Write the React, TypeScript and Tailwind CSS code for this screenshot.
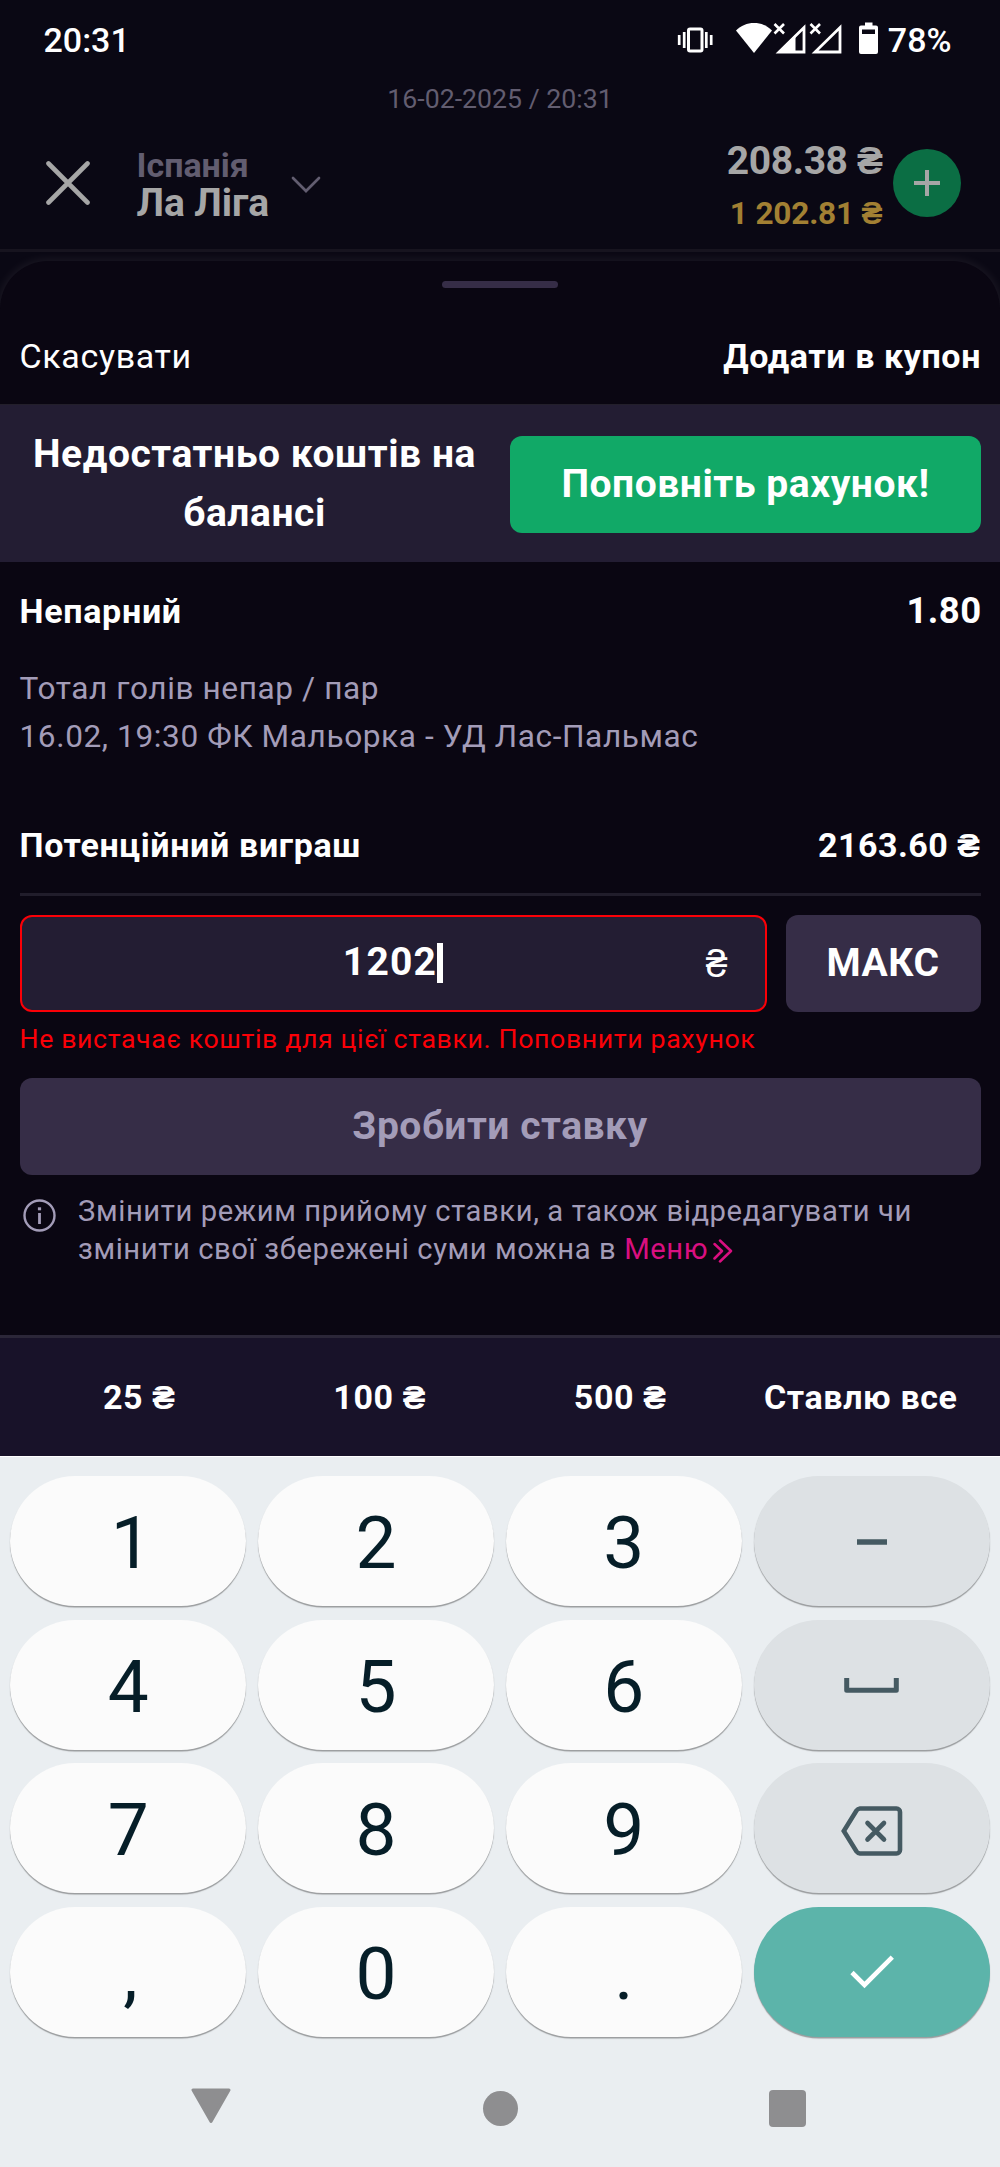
import React from 'react';

interface KeyProps {
  children: React.ReactNode;
  variant?: 'digit' | 'action' | 'confirm';
}

const keyStyles = {
  digit: 'bg-[#fbfbfb] text-[#061e28]',
  action: 'bg-[#dde1e4] text-[#455a62]',
  confirm: 'bg-[#5cb4aa] text-white',
};

const Key: React.FC<KeyProps> = ({ children, variant = 'digit' }) => (
  <button
    className={`flex h-[130px] items-center justify-center rounded-[65px] pt-[5px] text-[73px] leading-none shadow-[0_1.5px_1px_rgba(0,0,0,0.35)] ${keyStyles[variant]}`}
  >
    {children}
  </button>
);

const StatusBar = () => (
  <div className="flex h-[81px] items-center pb-[2px] pl-[43.5px] text-[34px] font-medium leading-none text-white">
    <span>20:31</span>

    {/* Vibrate */}
    <svg className="ml-auto" width="36" height="28" viewBox="0 0 36 28" fill="none" stroke="currentColor">
      <rect x="11.5" y="3" width="13.5" height="22" rx="1.5" strokeWidth="3" />
      <path d="M7.2 6v16M2.2 9v10M29.3 6v16M34.2 9v10" strokeWidth="2.7" />
    </svg>

    <div className="ml-[23px] flex -translate-y-[2px] items-center">
      <svg width="36" height="32" viewBox="0 0 36 32" fill="currentColor">
        <path d="M18 31 0 8.5C5 3.5 11 1 18 1s13 2.5 18 7.5Z" />
      </svg>
      <svg className="ml-[1.5px]" width="34" height="32" viewBox="0 0 34 32" fill="none" stroke="currentColor">
        <path d="M1.5 2 11 11.5M11 2 1.5 11.5" strokeWidth="2.6" />
        <path d="M31 5.5V30H6Z" strokeWidth="2.8" />
        <path d="M5 30.5 22.5 12.5V30.5Z" fill="currentColor" stroke="none" />
      </svg>
      <svg className="ml-[2px]" width="34" height="32" viewBox="0 0 34 32" fill="none" stroke="currentColor">
        <path d="M1.5 2 11 11.5M11 2 1.5 11.5" strokeWidth="2.6" />
        <path d="M31 5.5V30H6Z" strokeWidth="2.8" />
      </svg>
      <svg className="ml-[15.5px]" width="19" height="32" viewBox="0 0 19 32" fill="currentColor">
        <path
          fillRule="evenodd"
          d="M6 .5h7.500v3H17a2 2 0 0 1 2 2V30a2 2 0 0 1-2 2H2a2 2 0 0 1-2-2V5.500a2 2 0 0 1 2-2h4ZM3 7.500v4.500h13V7.500Z"
        />
      </svg>
    </div>
    <span className="mr-[48.5px] ml-[10px]">78%</span>
  </div>
);

const Header = () => (
  <header className="flex h-[135px] items-center border-b-[3px] border-[#17141f] font-bold">
    <svg className="ml-[46px]" width="44" height="44" viewBox="0 0 44 44" stroke="#a6a6a6" strokeWidth="4.6" strokeLinecap="round">
      <path d="M2.5 2.5 41.5 41.5M41.5 2.5 2.5 41.5" />
    </svg>
    <div className="mt-[2px] ml-[46.5px] leading-[38.5px]">
      <div className="text-[34px] text-[#625d70]">Іспанія</div>
      <div className="text-[39px] tracking-[-0.1px] text-[#a6a6a6]">Ла Ліга</div>
    </div>
    <svg className="mt-[3px] ml-[22px]" width="30" height="18" viewBox="0 0 30 18" fill="none" stroke="#625d70" strokeWidth="2.7" strokeLinecap="round">
      <path d="m2 2 13 13 13-13" />
    </svg>
    <div className="mt-[9px] ml-auto text-right leading-[51.5px]">
      <div className="text-[39px] tracking-[-0.4px] text-[#a6a6a6]">208.38 ₴</div>
      <div className="text-[31.6px] tracking-[-0.2px] text-[#a28033]">1 202.81 ₴</div>
    </div>
    <button className="mr-[39px] ml-[10.5px] flex size-[68px] items-center justify-center rounded-full bg-[#0b6e44]">
      <svg width="26" height="26" viewBox="0 0 26 26" stroke="#a6a6a6" strokeWidth="4">
        <path d="M13 0v26M0 13h26" />
      </svg>
    </button>
  </header>
);

const BetSheet = () => (
  <section className="mt-[9px] flex h-[1074px] flex-col rounded-t-[48px] bg-[#0a0612] pt-5 shadow-[0_0_10px_2px_rgba(255,240,230,0.07)]">
    <div className="mx-auto h-[7px] w-[116px] rounded-full bg-[#362d47]" />

    <div className="flex h-[116px] items-center justify-between pr-[19px] pl-[19.5px] pt-5 text-[34px] leading-none text-white">
      <button className="tracking-[0.65px]">Скасувати</button>
      <button className="font-bold tracking-[0.6px]">Додати в купон</button>
    </div>

    <div className="flex h-[158px] items-center gap-5 border-t border-[#231f2b] bg-[#231d33] pr-[19px] pl-[19px] text-[39px] font-bold text-white">
      <p className="flex-1 text-center leading-[58.3px] tracking-[0.55px]">
        Недостатньо коштів на
        <br />
        балансі
      </p>
      <button className="mt-[2px] h-[97px] w-[471px] rounded-xl bg-[#11a967] tracking-[0.55px]">
        Поповніть рахунок!
      </button>
    </div>

    <div className="flex h-[98px] items-center justify-between pr-[18.5px] pl-[19.5px] font-bold leading-none text-white">
      <span className="text-[34px] tracking-[0.7px]">Непарний</span>
      <span className="text-[36.5px] tracking-[0.4px]">1.80</span>
    </div>

    <div className="mt-[4.5px] mb-[-0.5px] px-[19.5px] text-[31.6px] leading-[48.3px] tracking-[0.6px] text-[#a39cb8]">
      <p>Тотал голів непар / пар</p>
      <p>16.02, 19:30 ФК Мальорка - УД Лас-Пальмас</p>
    </div>

    <div className="mx-[19.5px] flex h-[135px] items-center justify-between border-b-[3px] border-[#211d2b] pt-9 text-[34px] font-bold leading-none text-white">
      <span className="tracking-[0.65px]">Потенційний виграш</span>
      <span className="tracking-[0.5px]">2163.60 ₴</span>
    </div>

    <div className="mx-[19.5px] mt-[19px] flex h-[97px] gap-[19px] text-[39px] font-bold text-white">
      <div className="relative flex flex-1 items-center justify-center rounded-xl border-[2.5px] border-[#fb0007] bg-[#231d33] leading-none">
        <span className="-mt-[2px] tracking-[1.2px]">1202</span>
        <span className="h-10 w-[6px] bg-white" />
        <span className="absolute top-[28px] right-[37px] font-medium">₴</span>
      </div>
      <button className="w-[195px] rounded-xl bg-[#362d47] tracking-[0.5px]">МАКС</button>
    </div>

    <p className="flex h-[54px] items-center px-[19.5px] text-[26.7px] tracking-[0.63px] text-[#fb0007]">
      Не вистачає коштів для цієї ставки. Поповнити рахунок
    </p>

    <button className="mx-[19.5px] mt-3 h-[97px] rounded-xl bg-[#362d47] text-[39px] font-bold tracking-[0.52px] text-[#a39cb8]">
      Зробити ставку
    </button>

    <div className="mt-[17px] flex pl-[22.5px] text-[29.2px] leading-[38.8px] tracking-[0.6px] text-[#a39cb8]">
      <svg className="mt-[7px] shrink-0" width="33" height="33" viewBox="0 0 33 33" fill="none" stroke="currentColor" strokeWidth="2.4">
        <circle cx="16.5" cy="16.5" r="15" />
        <path d="M16.5 14v11" strokeWidth="2.8" />
        <path d="M16.5 8.3v3" strokeWidth="3.2" />
      </svg>
      <p className="ml-[22.5px]">
        Змінити режим прийому ставки, а також відредагувати чи
        <br />
        змінити свої збережені суми можна в{' '}
        <a className="text-[#d90f80]">
          Меню
          <svg className="ml-[5px] inline-block align-[-4px]" width="20" height="24" viewBox="0 0 20 24" fill="none" stroke="currentColor" strokeWidth="2.5" strokeLinecap="round" strokeLinejoin="round">
            <path d="m1.5 5 7.5 7-7.5 7.5M7 1.5 18 12 7 22.5" />
          </svg>
        </a>
      </p>
    </div>
  </section>
);

const quickAmounts = ['25 ₴', '100 ₴', '500 ₴', 'Ставлю все'];

const QuickAmounts = () => (
  <div className="grid h-[121px] grid-cols-4 border-t-[3px] border-[#2b2638] bg-[#181229] px-[19px] text-[34px] font-bold tracking-[0.64px] text-white">
    {quickAmounts.map((amount) => (
      <button key={amount}>{amount}</button>
    ))}
  </div>
);

const Keyboard = () => (
  <div className="h-[711px] border-t border-white bg-[#eaeef1] pt-[19px]">
    <div className="grid grid-cols-4 gap-x-[11.6px] gap-y-[13.6px] px-[10.3px]">
      <Key>
        <span className="pl-1.5">1</span>
      </Key>
      <Key>2</Key>
      <Key>3</Key>
      <Key variant="action">
        <svg className="-mt-[3px]" width="30" height="6" viewBox="0 0 30 6">
          <path d="M0 3h30" stroke="currentColor" strokeWidth="5.5" />
        </svg>
      </Key>

      <Key>4</Key>
      <Key>5</Key>
      <Key>6</Key>
      <Key variant="action">
        <svg className="-mt-[3px]" width="55" height="15" viewBox="0 0 55 15" fill="none" stroke="currentColor" strokeWidth="5" strokeLinejoin="round">
          <path d="M2.7 0v12.3h49.6V0" />
        </svg>
      </Key>

      <Key>7</Key>
      <Key>8</Key>
      <Key>9</Key>
      <Key variant="action">
        <svg className="-mr-[1px]" width="62" height="50" viewBox="0 0 62 50" fill="none" stroke="currentColor" strokeWidth="4.6" strokeLinecap="round">
          <path d="M19 2.5h36.5a3.5 3.5 0 0 1 3.5 3.5v38a3.5 3.5 0 0 1-3.5 3.5H19a5 5 0 0 1-3.5-2L2.8 25 15.5 4.5a5 5 0 0 1 3.500-2Z" />
          <path d="m26.5 17 16.500 16.500M43 17 26.500 33.500" />
        </svg>
      </Key>

      <Key>
        <span className="pl-1">,</span>
      </Key>
      <Key>0</Key>
      <Key>.</Key>
      <Key variant="confirm">
        <svg className="-mt-[5px]" width="44" height="34" viewBox="0 0 44 34" fill="none" stroke="currentColor" strokeWidth="4.6">
          <path d="m2 17.5 12.5 12.5L42.3 2.2" />
        </svg>
      </Key>
    </div>

    {/* System navigation */}
    <div className="mt-[33px] flex h-[77px] items-center justify-center gap-[251.5px] pr-[3px] text-[#8e8e90]">
      <svg className="-mt-[4px]" width="40" height="36" viewBox="0 0 40 36" fill="currentColor" stroke="currentColor" strokeWidth="3" strokeLinejoin="round">
        <path d="M2 2h36L20 33.5Z" />
      </svg>
      <div className="size-[35px] rounded-full bg-current" />
      <div className="size-[37px] rounded-[4px] bg-current" />
    </div>
  </div>
);

export default function App() {
  return (
    <div className="h-[2167px] w-[1000px] overflow-hidden bg-[#0a0814] font-['Roboto',sans-serif]">
      <StatusBar />
      <div className="flex h-9 items-center justify-center text-[26.7px] text-[#625d70]">
        16-02-2025 / 20:31
      </div>
      <Header />
      <BetSheet />
      <QuickAmounts />
      <Keyboard />
    </div>
  );
}
